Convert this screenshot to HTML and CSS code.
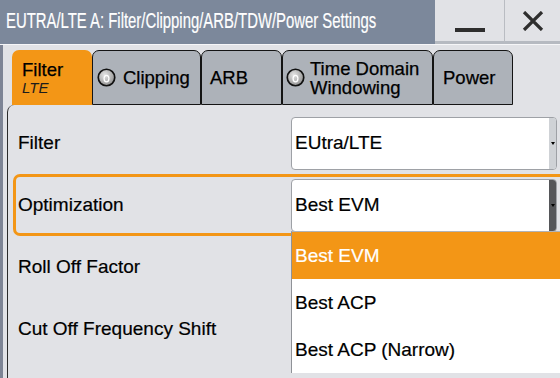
FILE: index.html
```html
<!DOCTYPE html>
<html>
<head>
<meta charset="utf-8">
<link rel="stylesheet" href="styles.css">
</head>
<body>
<div class="window">
  <header class="titlebar">
    <div class="title"><span class="title-text">EUTRA/LTE A: Filter/Clipping/ARB/TDW/Power Settings</span></div>
    <div class="tbtn min"><span class="minbar"></span></div>
    <div class="tbtn close">
      <svg width="22" height="20" viewBox="0 0 22 20"><path d="M2 1 L20 19 M20 1 L2 19" stroke="#2e2e2e" stroke-width="3.2" fill="none"/></svg>
    </div>
  </header>
  <div class="sep"></div>
  <main class="body">
    <nav class="tabs">
      <div class="tab active t-filter">
        <div class="stack"><span>Filter</span><span class="sub">LTE</span></div>
      </div>
      <div class="tab gray t-clip">
        <svg class="ind" width="19" height="19" viewBox="0 0 18 18"><defs><radialGradient id="g1" cx="40%" cy="35%" r="70%"><stop offset="0" stop-color="#e6e6e6"/><stop offset="1" stop-color="#8e8e8e"/></radialGradient></defs><circle cx="9" cy="9" r="7.8" fill="url(#g1)" stroke="#111" stroke-width="1.6"/><ellipse cx="9" cy="10" rx="2.3" ry="3.1" fill="none" stroke="#fff" stroke-width="1.2"/></svg>
        <span>Clipping</span>
      </div>
      <div class="tab gray t-arb"><span>ARB</span></div>
      <div class="tab gray t-tdw">
        <svg class="ind" width="19" height="19" viewBox="0 0 18 18"><defs><radialGradient id="g2" cx="40%" cy="35%" r="70%"><stop offset="0" stop-color="#e6e6e6"/><stop offset="1" stop-color="#8e8e8e"/></radialGradient></defs><circle cx="9" cy="9" r="7.8" fill="url(#g2)" stroke="#111" stroke-width="1.6"/><ellipse cx="9" cy="10" rx="2.3" ry="3.1" fill="none" stroke="#fff" stroke-width="1.2"/></svg>
        <div class="stack"><span>Time Domain</span><span>Windowing</span></div>
      </div>
      <div class="tab gray t-power"><span>Power</span></div>
    </nav>
    <section class="panel">
      <div class="row">
        <span class="label">Filter</span>
        <div class="combo"><span class="val">EUtra/LTE</span><span class="arrow"></span></div>
      </div>
      <div class="row focus">
        <span class="label">Optimization</span>
        <div class="combo open"><span class="val">Best EVM</span><span class="arrow"></span>
          <ul class="list">
            <li class="sel">Best EVM</li>
            <li>Best ACP</li>
            <li>Best ACP (Narrow)</li>
          </ul>
        </div>
      </div>
      <div class="row"><span class="label">Roll Off Factor</span></div>
      <div class="row"><span class="label">Cut Off Frequency Shift</span></div>
    </section>
  </main>
</div>
</body>
</html>
```
FILE: styles.css
```css
html, body {
  margin: 0;
  padding: 0;
}
body {
  font-family: "Liberation Sans", Arial, sans-serif;
  color: #000;
}
.window {
  width: 560px;
  height: 378px;
  overflow: hidden;
  background: #e1e2e6;
  display: flex;
  flex-direction: column;
}
.titlebar {
  height: 44px;
  display: flex;
  flex: none;
}
.title {
  flex: 1;
  min-width: 0;
  background: #7c889b;
  color: #fff;
  font-family: "Liberation Sans", Arial, sans-serif;
  font-size: 21.5px;
  line-height: 42px;
  padding-left: 6px;
  white-space: nowrap;
  overflow: hidden;
}
.title-text {
  display: inline-block;
  transform: scaleX(0.692);
  transform-origin: 0 50%;
  -webkit-text-stroke: 0.2px #fff;
}
.tbtn {
  flex: none;
  background: #e1e2e6;
  border-bottom: 3px solid #b6bac1;
  box-sizing: border-box;
  height: 44px;
  display: flex;
  align-items: center;
  justify-content: center;
}
.tbtn.min {
  width: 70px;
  border-right: 1px solid #b9bcc2;
  align-items: flex-end;
}
.minbar {
  width: 30px;
  height: 4px;
  background: #2e2e2e;
  margin-bottom: 9px;
}
.tbtn.close {
  width: 55px;
}
.sep {
  height: 1px;
  background: #f6f6f8;
  flex: none;
}
.body {
  flex: 1;
  border-left: 3px solid #7d8495;
  padding-top: 5px;
  display: flex;
  flex-direction: column;
}
.tabs {
  display: flex;
  margin-left: 9px;
  height: 55px;
  flex: none;
}
.tab {
  box-sizing: border-box;
  height: 55px;
  border-radius: 7px 7px 0 0;
  display: flex;
  align-items: center;
  font-size: 18.5px;
  white-space: nowrap;
  -webkit-text-stroke: 0.25px #000;
}
.tab.active {
  background: #f39616;
  padding-left: 10px;
}
.tab.gray {
  background: #adb2b9;
  border: 1px solid #141414;
}
.stack {
  display: flex;
  flex-direction: column;
  line-height: 19px;
}
.sub {
  font-style: italic;
  font-size: 15px;
  line-height: 17px;
  color: #1c1c1c;
  -webkit-text-stroke: 0;
}
.t-filter { width: 80px; }
.t-clip { width: 109px; padding-left: 4px; }
.t-arb { width: 81px; padding-left: 8px; }
.t-tdw { width: 151px; padding-left: 3px; }
.t-power { width: 80px; padding-left: 9px; }
.ind {
  flex: none;
  margin-right: 7px;
}
.t-tdw .ind { margin-right: 5px; }
.panel {
  flex: 1;
  margin-left: 4px;
  border-left: 1px solid #2a2a2a;
  border-top-left-radius: 7px;
  padding-top: 7px;
}
.row {
  box-sizing: border-box;
  height: 62px;
  margin-left: 5px;
  margin-right: -20px;
  border: 3px solid transparent;
  border-radius: 7px;
  display: grid;
  grid-template-columns: 275px 266px;
  align-items: center;
  font-size: 19px;
}
.row.focus {
  border-color: #f39616;
}
.label {
  padding-left: 2px;
  white-space: nowrap;
  -webkit-text-stroke: 0.2px #000;
}
.combo {
  position: relative;
  box-sizing: border-box;
  height: 53px;
  background: #fff;
  border: 1px solid #9ea1a6;
  border-radius: 4px;
  display: flex;
  align-items: center;
}
.val {
  flex: 1;
  padding-left: 3px;
  font-size: 19px;
  -webkit-text-stroke: 0.2px #000;
}
.arrow {
  align-self: stretch;
  width: 7px;
  background: #cfd2d6;
  border-radius: 0 3px 3px 0;
  display: flex;
  align-items: center;
  justify-content: center;
}
.arrow::after {
  content: "";
  width: 0;
  height: 0;
  border-left: 2.5px solid transparent;
  border-right: 2.5px solid transparent;
  border-top: 3px solid #000;
}
.combo.open .arrow {
  background: #555659;
}
.list {
  position: absolute;
  left: -1px;
  top: 100%;
  margin: 0;
  padding: 0;
  list-style: none;
  width: 290px;
  background: #fff;
  border-left: 1px solid #8f9297;
  border-top: 1px solid #b0b3b8;
}
.list li {
  height: 47px;
  line-height: 47px;
  padding-left: 3px;
  font-size: 19px;
  white-space: nowrap;
  -webkit-text-stroke: 0.2px #000;
}
.list li.sel {
  background: #f39616;
  color: #fff;
  -webkit-text-stroke: 0.2px #fff;
}
```
